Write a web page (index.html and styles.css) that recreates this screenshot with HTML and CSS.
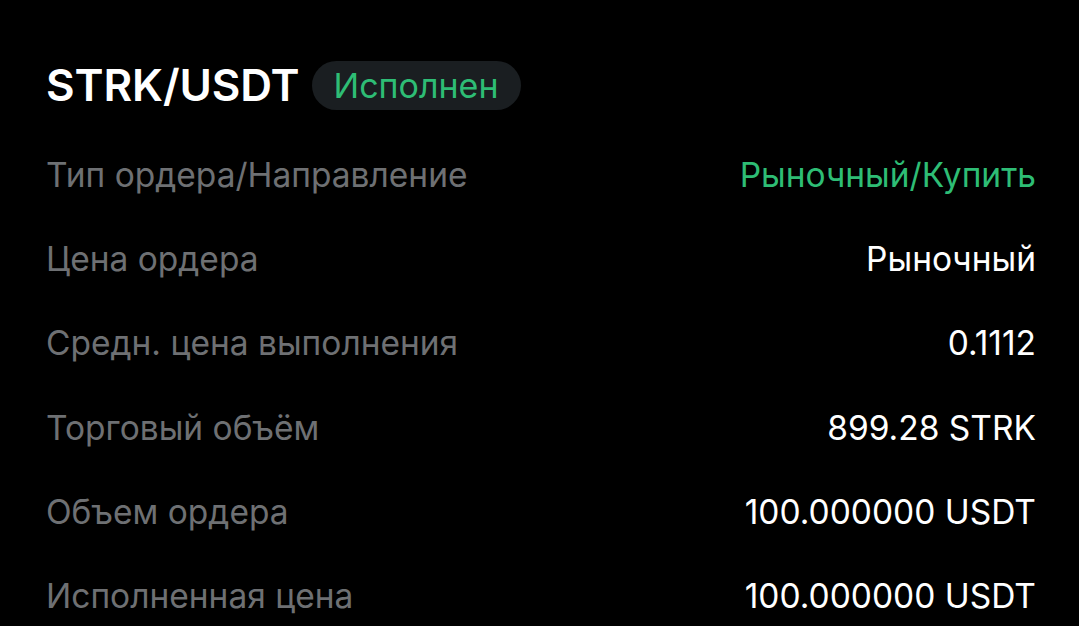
FILE: index.html
```html
<!DOCTYPE html>
<html lang="ru">
<head>
    <meta charset="UTF-8">
    <meta name="viewport" content="width=device-width, initial-scale=1.0">
    <title>STRK/USDT</title>
    <link rel="stylesheet" href="styles.css">
</head>
<body>

    <div class="order">
        <div class="order-header">
            <h1 class="pair">STRK/USDT</h1>
            <span class="status">Исполнен</span>
        </div>

        <div class="rows">
            <div class="row">
                <span class="label">Тип ордера/Направление</span>
                <span class="value buy">Рыночный/Купить</span>
            </div>
            <div class="row">
                <span class="label">Цена ордера</span>
                <span class="value">Рыночный</span>
            </div>
            <div class="row">
                <span class="label">Средн. цена выполнения</span>
                <span class="value">0.1112</span>
            </div>
            <div class="row">
                <span class="label">Торговый объём</span>
                <span class="value">899.28 STRK</span>
            </div>
            <div class="row">
                <span class="label">Объем ордера</span>
                <span class="value">100.000000 USDT</span>
            </div>
            <div class="row">
                <span class="label">Исполненная цена</span>
                <span class="value">100.000000 USDT</span>
            </div>
        </div>
    </div>

</body>
</html>
```

FILE: styles.css
```css
/* Basic reset */
* {
    margin: 0;
    padding: 0;
    box-sizing: border-box;
}

body {
    background: #000;
    font-family: Inter, "Noto Sans", sans-serif;
    color: #fff;
    overflow: hidden;
}

.order {
    padding: 58px 43px 0 46px;
}

/* Title + status badge */
.order-header {
    display: flex;
    align-items: center;
    gap: 12px;
}

.pair {
    font-size: 44px;
    font-weight: 600;
    letter-spacing: -0.1px;
}

.status {
    display: inline-block;
    height: 49px;
    line-height: 49px;
    padding: 0 22px;
    border-radius: 25px;
    background: #1a1e21;
    color: #2ebd75;
    font-size: 34px;
}

/* Detail rows */
.rows {
    margin-top: 21px;
}

.row {
    display: flex;
    justify-content: space-between;
    align-items: center;
    height: 84.2px;
    font-size: 33.5px;
}

.label {
    color: #6e7073;
}

.value {
    color: #fff;
}

.value.buy {
    color: #2ebd75;
}
```
